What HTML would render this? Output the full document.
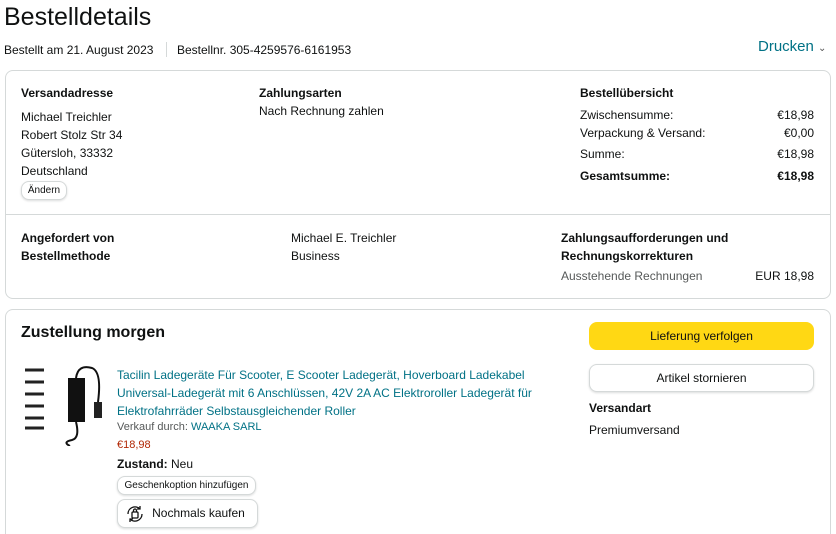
<!DOCTYPE html>
<html><head><meta charset="utf-8"><style>
*{box-sizing:border-box;margin:0;padding:0}
html,body{width:836px;height:534px;overflow:hidden}
body{background:#fff;font-family:"Liberation Sans",sans-serif;color:#0f1111;font-size:12px;position:relative}
.a{position:absolute;white-space:nowrap}
.b{font-weight:bold}
.box{position:absolute;border:1px solid #d5d9d9;border-radius:8px}
.btn{position:absolute;border:1px solid #d5d9d9;border-radius:8px;box-shadow:0 1px 2px rgba(15,17,17,.15);background:#fff;text-align:center}
.link{color:#007185}
</style></head><body>
<div class="a" style="left:4px;top:3px;font-size:25px">Bestelldetails</div>
<div class="a" style="left:4px;top:43px;font-size:12px">Bestellt am 21. August 2023</div>
<div class="a" style="left:166px;top:42px;width:1px;height:15px;background:#d5d9d9"></div>
<div class="a" style="left:177px;top:43px;font-size:12px">Bestellnr. 305-4259576-6161953</div>
<div class="a link" style="left:758px;top:38px;font-size:15px">Drucken <span style="font-size:10px;color:#555">&#8964;</span></div>

<div class="box" style="left:5px;top:70px;width:826px;height:229px"></div>
<div class="a b" style="left:21px;top:86px">Versandadresse</div>
<div class="a" style="left:21px;top:108px;line-height:18px">Michael Treichler<br>Robert Stolz Str 34<br>Gütersloh, 33332<br>Deutschland</div>
<div class="btn" style="left:21px;top:181px;width:46px;height:19px;font-size:10px;line-height:18px">Ändern</div>
<div class="a b" style="left:259px;top:86px">Zahlungsarten</div>
<div class="a" style="left:259px;top:104px">Nach Rechnung zahlen</div>
<div class="a b" style="left:580px;top:86px">Bestellübersicht</div>
<div class="a" style="left:580px;top:108px">Zwischensumme:</div><div class="a" style="right:22px;top:108px">€18,98</div>
<div class="a" style="left:580px;top:126px">Verpackung &amp; Versand:</div><div class="a" style="right:22px;top:126px">€0,00</div>
<div class="a" style="left:580px;top:147px">Summe:</div><div class="a" style="right:22px;top:147px">€18,98</div>
<div class="a b" style="left:580px;top:169px">Gesamtsumme:</div><div class="a b" style="right:22px;top:169px">€18,98</div>
<div class="a" style="left:6px;top:214px;width:824px;height:1px;background:#d5d9d9"></div>
<div class="a b" style="left:21px;top:229px;line-height:18px">Angefordert von<br>Bestellmethode</div>
<div class="a" style="left:291px;top:229px;line-height:18px">Michael E. Treichler<br>Business</div>
<div class="a b" style="left:561px;top:229px;line-height:18px">Zahlungsaufforderungen und<br>Rechnungskorrekturen</div>
<div class="a" style="left:561px;top:269px;color:#565959">Ausstehende Rechnungen</div><div class="a" style="right:22px;top:269px">EUR 18,98</div>

<div class="box" style="left:5px;top:309px;width:826px;height:225px;border-bottom:none;border-radius:8px 8px 0 0"></div>
<div class="a b" style="left:21px;top:324px;font-size:16px">Zustellung morgen</div>
<div class="a" style="left:589px;top:322px;width:225px;height:28px;background:#ffd814;border-radius:8px;text-align:center;line-height:28px">Lieferung verfolgen</div>
<div class="btn" style="left:589px;top:364px;width:225px;height:28px;line-height:27px">Artikel stornieren</div>
<div class="a b" style="left:589px;top:401px">Versandart</div>
<div class="a" style="left:589px;top:423px">Premiumversand</div>

<svg class="a" style="left:22px;top:362px" width="88" height="84" viewBox="0 0 88 84">
<g stroke="#222" stroke-width="3"><line x1="3" y1="8" x2="22" y2="8"/><line x1="3" y1="20" x2="22" y2="20"/><line x1="3" y1="32" x2="22" y2="32"/><line x1="3" y1="44" x2="22" y2="44"/><line x1="3" y1="56" x2="22" y2="56"/><line x1="3" y1="66" x2="22" y2="66"/></g>
<rect x="46" y="16" width="17" height="44" fill="#111"/>
<path d="M54 16 Q56 2 70 6 Q80 10 76 40 M54 60 Q58 76 50 78 Q40 80 48 84" stroke="#111" stroke-width="2" fill="none"/>
<rect x="72" y="40" width="8" height="16" fill="#222"/>
</svg>
<div class="a link" style="left:117px;top:366px;line-height:18px;font-size:12px">Tacilin Ladegeräte Für Scooter, E Scooter Ladegerät, Hoverboard Ladekabel<br>Universal-Ladegerät mit 6 Anschlüssen, 42V 2A AC Elektroroller Ladegerät für<br>Elektrofahrräder Selbstausgleichender Roller</div>
<div class="a" style="left:117px;top:421px;font-size:11px;color:#565959">Verkauf durch: <span class="link">WAAKA SARL</span></div>
<div class="a" style="left:117px;top:439px;font-size:11px;color:#b12704">€18,98</div>
<div class="a" style="left:117px;top:457px"><b>Zustand:</b> Neu</div>
<div class="btn" style="left:117px;top:476px;width:139px;height:19px;font-size:10px;line-height:17px">Geschenkoption hinzufügen</div>
<div class="btn" style="left:117px;top:499px;width:141px;height:29px;font-size:12px;line-height:27px;padding-left:22px">Nochmals kaufen</div>
<svg class="a" style="left:125px;top:504px" width="20" height="20" viewBox="0 0 20 20" fill="none" stroke="#111" stroke-width="1.3"><path d="M3 10a7 7 0 0 1 12-5M17 10a7 7 0 0 1-12 5"/><path d="M15 2v3h-3M5 18v-3h3"/><rect x="7" y="8" width="6" height="6" rx="1"/><path d="M8.5 8V6.5a1.5 1.5 0 0 1 3 0V8"/></svg>
</body></html>
